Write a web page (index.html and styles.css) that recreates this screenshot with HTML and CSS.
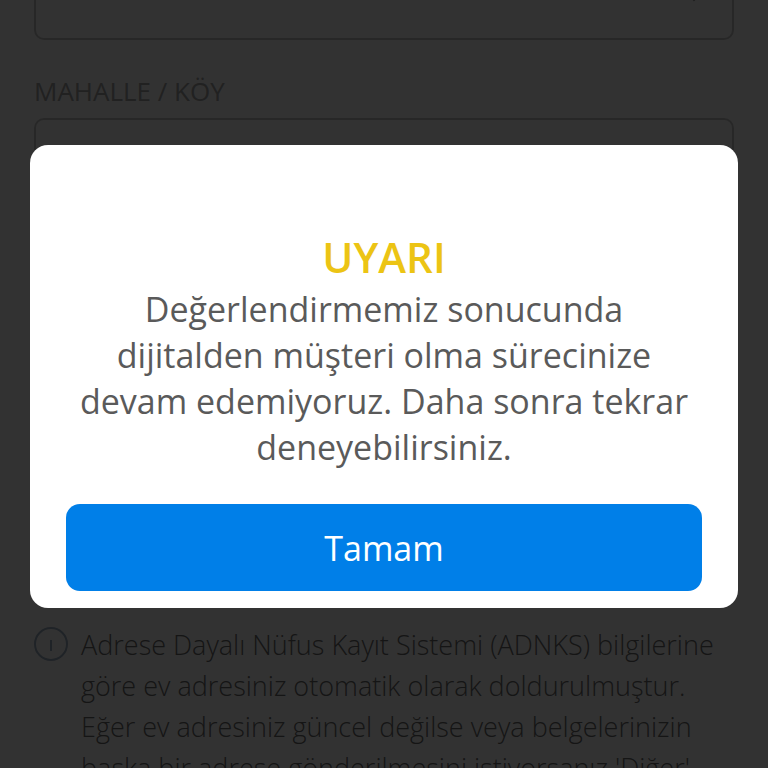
FILE: index.html
```html
<!DOCTYPE html>
<html lang="tr">
<head>
<meta charset="utf-8">
<meta name="viewport" content="width=device-width, initial-scale=1">
<title>Uyarı</title>
<link rel="stylesheet" href="styles.css">
</head>
<body>
<main class="form">
  <div class="field field-scrolled">
    <select class="control" aria-label="İlçe"><option></option></select>
    <svg class="chevron" viewBox="0 0 20 12" aria-hidden="true"><path d="M2 2l8 8 8-8"/></svg>
  </div>
  <label class="label" for="mahalle">MAHALLE / KÖY</label>
  <div class="field">
    <select class="control" id="mahalle"><option></option></select>
  </div>
  <div class="info">
    <svg class="info-icon" viewBox="0 0 36 36" aria-hidden="true"><circle cx="17" cy="18" r="16"/><path d="M17 14v11"/></svg>
    <p class="info-text">Adrese Dayalı Nüfus Kayıt Sistemi (ADNKS) bilgilerine göre ev adresiniz otomatik olarak doldurulmuştur. Eğer ev adresiniz güncel değilse veya belgelerinizin başka bir adrese gönderilmesini istiyorsanız 'Diğer'</p>
  </div>
</main>
<div class="overlay">
  <section class="dialog" role="alertdialog" aria-modal="true" aria-labelledby="title" aria-describedby="message">
    <h1 class="title" id="title">UYARI</h1>
    <p class="message" id="message">Değerlendirmemiz sonucunda dijitalden müşteri olma sürecinize devam edemiyoruz. Daha sonra tekrar deneyebilirsiniz.</p>
    <button class="confirm" type="button">Tamam</button>
  </section>
</div>
</body>
</html>
```
FILE: styles.css
```css
* {
  box-sizing: border-box;
}

body {
  margin: 0;
  background: #fff;
  font-family: "Open Sans", "Noto Sans", sans-serif;
}

.form {
  height: 100vh;
  overflow: hidden;
  padding: 0 34px;
}

.field {
  position: relative;
  margin-bottom: 418px;
}

/* The upper half of this field is scrolled out of view. */
.field-scrolled {
  margin-top: -48px;
  margin-bottom: 33px;
}

.control {
  display: block;
  width: 100%;
  height: 88px;
  border: 2px solid #c8c8c8;
  border-radius: 10px;
  background: transparent;
  appearance: none;
}

.chevron {
  position: absolute;
  top: 38px;
  right: 30px;
  width: 20px;
  height: 12px;
  fill: none;
  stroke: #a0a0a0;
  stroke-width: 2;
}

.label {
  display: block;
  margin-bottom: 9px;
  color: #a8a8a8;
  font-size: 26px;
  line-height: 36px;
}

.info {
  display: flex;
  gap: 11px;
}

.info-icon {
  flex: none;
  width: 36px;
  height: 36px;
  margin-top: 2px;
  fill: none;
  stroke: #a0b0c4;
  stroke-width: 2;
}

.info-text {
  margin: 0;
  padding-right: 14px;
  color: #6c6c6c;
  font-size: 27px;
  font-weight: 300;
  line-height: 41px;
}

.overlay {
  position: fixed;
  inset: 0;
  display: flex;
  align-items: center;
  justify-content: center;
  padding: 0 30px 16px;
  background: rgba(0, 0, 0, 0.804);
}

.dialog {
  width: 100%;
  padding: 84px 36px 17px;
  border-radius: 18px;
  background: #fff;
  text-align: center;
}

.title {
  margin: 0;
  color: #ecc414;
  font-size: 42px;
  font-weight: 600;
  line-height: 56px;
}

.message {
  margin: 0;
  padding: 1px 12px 34px;
  color: #5a5a5a;
  font-size: 34px;
  line-height: 46px;
}

.confirm {
  display: block;
  width: 100%;
  height: 87px;
  padding: 2px 0 0;
  border: 0;
  border-radius: 14px;
  background: #007fe8;
  color: #fff;
  font: inherit;
  font-size: 34px;
}
```
